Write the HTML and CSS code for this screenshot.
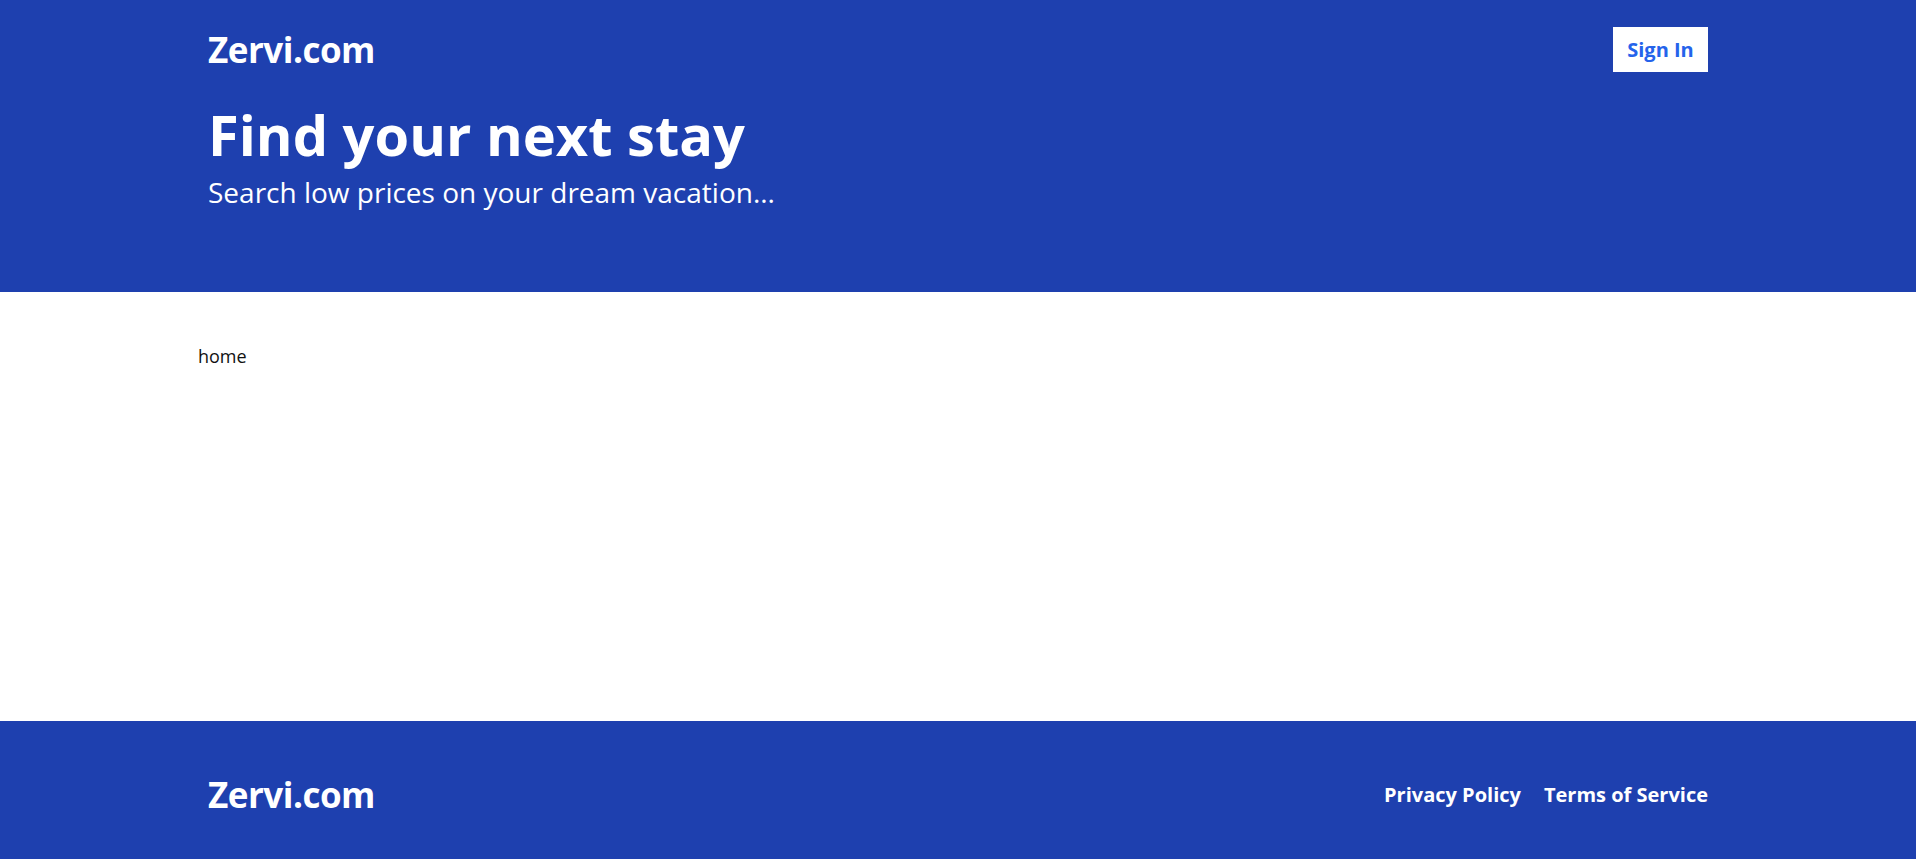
FILE: index.html
```html
<!DOCTYPE html>
<html lang="en">
<head>
<meta charset="utf-8">
<title>Zervi.com</title>
<link rel="stylesheet" href="styles.css">
</head>
<body>
<div class="page">
  <header class="hero">
    <div class="container">
      <div class="topbar">
        <span class="logo">Zervi.com</span>
        <a class="signin" href="#">Sign In</a>
      </div>
      <div class="intro">
        <h1 class="title">Find your next stay</h1>
        <p class="subtitle">Search low prices on your dream vacation...</p>
      </div>
    </div>
  </header>
  <main class="content">
    <div class="content-inner">home</div>
  </main>
  <footer class="footer">
    <div class="container footer-row">
      <span class="logo">Zervi.com</span>
      <nav class="footer-links">
        <a href="#">Privacy Policy</a>
        <a href="#">Terms of Service</a>
      </nav>
    </div>
  </footer>
</div>
</body>
</html>
```

FILE: styles.css
```css
* { box-sizing: border-box; }
html, body { margin: 0; padding: 0; }
body {
  font-family: "Open Sans", "Noto Sans", "Liberation Sans", sans-serif;
  color: #111;
  background: #fff;
}
a { text-decoration: none; }
.page {
  min-height: 100vh;
  display: flex;
  flex-direction: column;
}
.container {
  width: 1500px;
  margin: 0 auto;
}
.hero {
  background: #1e40af;
  height: 292px;
  padding-top: 27px;
}
.topbar {
  display: flex;
  justify-content: space-between;
  align-items: center;
}
.logo {
  color: #fff;
  font-weight: 700;
  font-size: 35px;
  line-height: 45px;
  letter-spacing: -0.5px;
}
.signin {
  background: #fff;
  color: #2563eb;
  font-weight: 700;
  font-size: 20px;
  height: 45px;
  width: 95px;
  display: flex;
  align-items: center;
  justify-content: center;
}
.intro {
  margin-top: 32px;
}
.title {
  margin: 0;
  color: #fff;
  font-size: 56px;
  font-weight: 700;
  line-height: 60px;
  letter-spacing: 0;
}
.subtitle {
  margin: 10px 0 0;
  color: #fff;
  font-size: 28px;
  line-height: 36px;
}
.content {
  flex: 1;
}
.content-inner {
  width: 1520px;
  margin: 0 auto;
  padding-top: 52px;
  font-size: 18px;
}
.footer {
  background: #1e40af;
  height: 138px;
  display: flex;
  align-items: center;
}
.footer-row {
  display: flex;
  justify-content: space-between;
  align-items: center;
  padding-top: 8px;
}
.footer-links {
  display: flex;
  gap: 23px;
}
.footer-links a {
  color: #fff;
  font-weight: 700;
  font-size: 20px;
}
```
